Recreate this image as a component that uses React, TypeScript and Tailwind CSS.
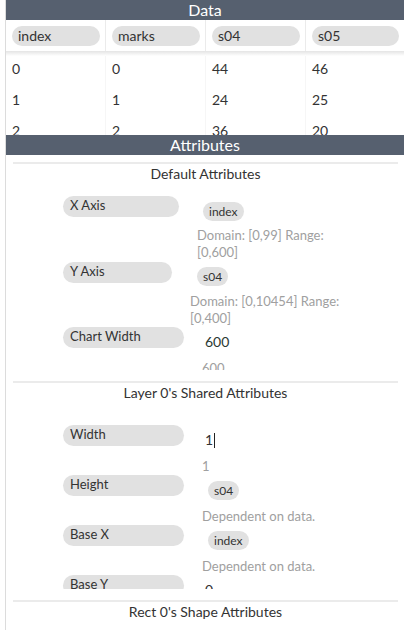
import React from "react";

const columns = ["index", "marks", "s04", "s05"];
const rows = [
  ["0", "0", "44", "46"],
  ["1", "1", "24", "25"],
  ["2", "2", "36", "20"],
];

function Header({ title }: { title: string }) {
  return (
    <div className="h-[20px] shrink-0 bg-[#56606f] text-white text-[16px] leading-[20px] text-center">
      {title}
    </div>
  );
}

function Label({ text, w }: { text: string; w: string }) {
  return (
    <div
      className={`${w} h-[21px] shrink-0 rounded-full bg-[#e1e1e1] pl-[7px] text-[13px] leading-[19px] text-[#333]`}
    >
      {text}
    </div>
  );
}

function Chip({ text, className }: { text: string; className: string }) {
  return (
    <div className={`flex ${className}`}>
      <span className="h-[19px] rounded-full bg-[#e1e1e1] px-[6px] text-[12px] leading-[19px] text-[#333]">
        {text}
      </span>
    </div>
  );
}

function Note({ text, className }: { text: string; className: string }) {
  return <div className={`text-[13px] leading-[17px] text-[#a0a0a0] ${className}`}>{text}</div>;
}

function Section({
  title,
  pad,
  children,
}: {
  title: string;
  pad: string;
  children?: React.ReactNode;
}) {
  return (
    <div className="mb-[11px] border-t-2 border-[#ebebeb]">
      <div className="h-[20px] text-center text-[14px] leading-[20px] text-[#333]">{title}</div>
      <div className={`h-[186px] overflow-hidden ${pad}`}>{children}</div>
    </div>
  );
}

export default function App() {
  return (
    <div className="w-[404px] h-[630px] overflow-hidden bg-white font-['Lato',sans-serif]">
      <div className="ml-[5px] h-full flex flex-col border-l border-[#dcdcdc]">
        <Header title="Data" />

        <div className="h-[115px] shrink-0 overflow-hidden">
          <div className="grid grid-cols-[100px_100px_100px_98px]">
            {columns.map((c, i) => (
              <div
                key={c}
                className={`h-[31px] pt-[6px] pl-[6px] pr-[5px] ${i < 3 ? "border-r border-[#ebebeb]" : ""}`}
              >
                <div className="h-[20px] rounded-full bg-[#e1e1e1] pl-[6px] text-[14px] leading-[20px] text-[#333]">
                  {c}
                </div>
              </div>
            ))}
          </div>
          <div className="h-[5px] bg-gradient-to-b from-[#e4e4e4] to-white" />
          {rows.map((r, ri) => (
            <div key={ri} className="grid grid-cols-[100px_100px_100px_98px]">
              {r.map((v, i) => (
                <div
                  key={i}
                  className={`h-[31px] pt-[3px] pl-[6px] text-[14px] leading-[20px] text-[#333] ${i < 3 ? "border-r border-[#f6f6f6]" : ""}`}
                >
                  {v}
                </div>
              ))}
            </div>
          ))}
        </div>

        <Header title="Attributes" />

        <div className="mt-[7px] ml-[7px] mr-[6px]">
          <Section title="Default Attributes" pad="pt-[12px]">
            <div className="flex h-[66px] pl-[50px]">
              <Label text="X Axis" w="w-[116px]" />
              <div className="ml-[18px] flex flex-col">
                <Chip text="index" className="mt-[6px] ml-[6px]" />
                <Note text="Domain: [0,99] Range: [0,600]" className="mt-[6px] w-[150px]" />
              </div>
            </div>
            <div className="flex h-[65px] pl-[50px]">
              <Label text="Y Axis" w="w-[109px]" />
              <div className="ml-[18px] flex flex-col">
                <Chip text="s04" className="mt-[5px] ml-[7px]" />
                <Note text="Domain: [0,10454] Range: [0,400]" className="mt-[7px] w-[160px]" />
              </div>
            </div>
            <div className="flex h-[50px] pl-[50px]">
              <Label text="Chart Width" w="w-[121px]" />
              <div className="ml-[18px] flex flex-col">
                <div className="h-[30px] pt-[5px] pl-[3px] text-[14px] leading-[20px] text-[#2b3a33]">600</div>
                <Note text="600" className="mt-[3px]" />
              </div>
            </div>
          </Section>

          <Section title="Layer 0's Shared Attributes" pad="pt-[22px]">
            <div className="flex h-[50px] pl-[50px]">
              <Label text="Width" w="w-[121px]" />
              <div className="ml-[18px] flex flex-col">
                <div className="h-[30px] pt-[5px] pl-[3px] flex items-start text-[14px] leading-[20px] text-[#333]">
                  1<span className="mt-[3px] ml-[1px] h-[15px] w-px bg-[#222]" />
                </div>
                <Note text="1" className="mt-[3px]" />
              </div>
            </div>
            <div className="flex h-[50px] pl-[50px]">
              <Label text="Height" w="w-[121px]" />
              <div className="ml-[18px] flex flex-col">
                <Chip text="s04" className="mt-[6px] ml-[6px]" />
                <Note text="Dependent on data." className="mt-[8px]" />
              </div>
            </div>
            <div className="flex h-[50px] pl-[50px]">
              <Label text="Base X" w="w-[121px]" />
              <div className="ml-[18px] flex flex-col">
                <Chip text="index" className="mt-[6px] ml-[6px]" />
                <Note text="Dependent on data." className="mt-[8px]" />
              </div>
            </div>
            <div className="flex h-[50px] pl-[50px]">
              <Label text="Base Y" w="w-[121px]" />
              <div className="ml-[18px] flex flex-col">
                <div className="h-[30px] pt-[5px] pl-[3px] text-[14px] leading-[20px] text-[#333]">0</div>
              </div>
            </div>
          </Section>

          <Section title="Rect 0's Shape Attributes" pad="pt-[22px]" />
        </div>
      </div>
    </div>
  );
}
